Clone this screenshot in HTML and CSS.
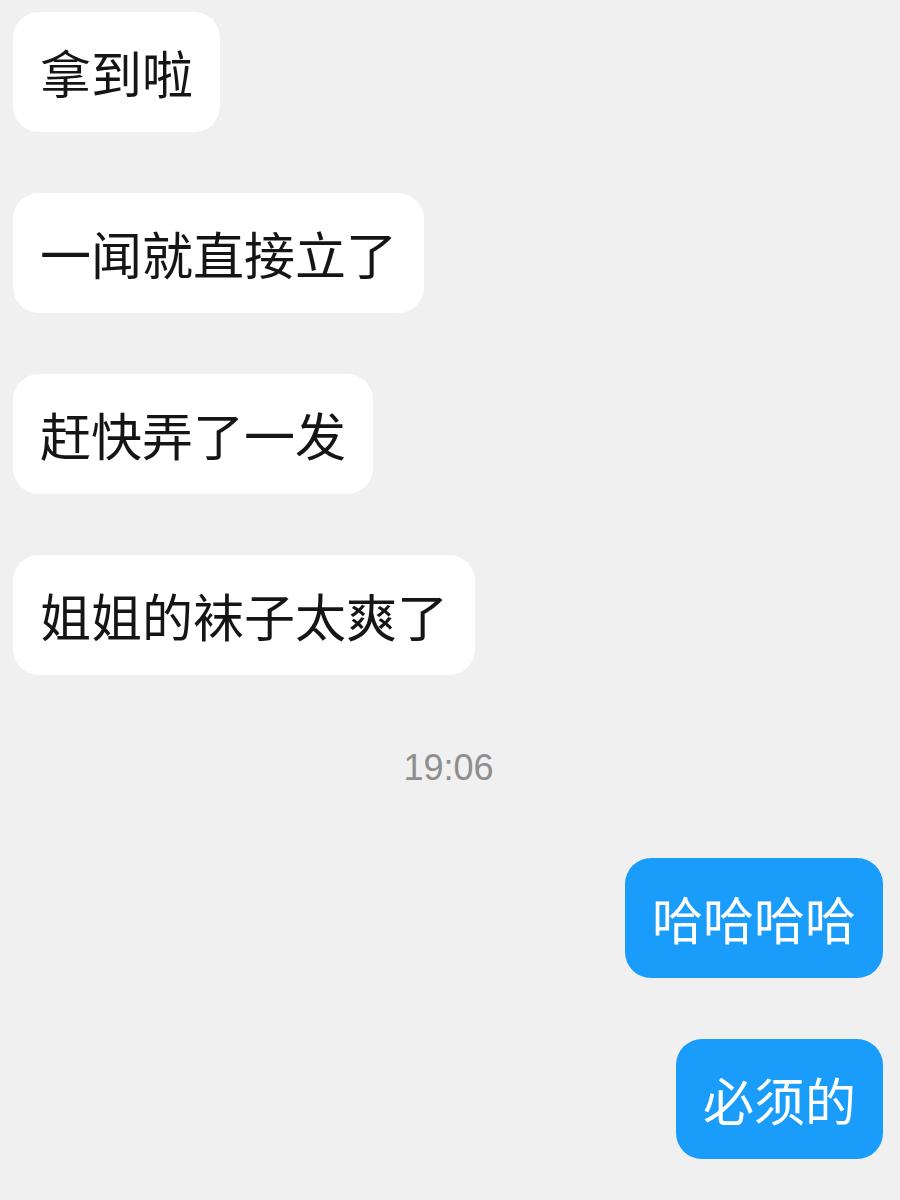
FILE: index.html
```html
<!doctype html>
<html>
<head>
<meta charset="utf-8">
<title>聊天</title>
<link rel="stylesheet" href="styles.css">
</head>
<body>
<div class="chat">
	<div class="row left"><div class="bubble">拿到啦</div></div>
	<div class="row left"><div class="bubble">一闻就直接立了</div></div>
	<div class="row left"><div class="bubble">赶快弄了一发</div></div>
	<div class="row left"><div class="bubble">姐姐的袜子太爽了</div></div>
	<div class="time">19:06</div>
	<div class="row right"><div class="bubble me">哈哈哈哈</div></div>
	<div class="row right"><div class="bubble me">必须的</div></div>
</div>
</body>
</html>
```
FILE: styles.css
```css
*{ margin:0; padding:0; box-sizing:border-box;}
body{ background:#f0f0f0; font-family:"Noto Sans CJK SC","Liberation Sans",sans-serif;}
.chat{ display:flex; flex-direction:column; gap:61px; padding:12px 17px 0 13px;}
.row{ display:flex;}
.row.right{ justify-content:flex-end;}
.bubble{ background:#fff; color:#151515; font-size:51px; line-height:60px; padding:30px 27px; border-radius:26px; white-space:nowrap;}
.bubble.me{ background:#1a9cfb; color:#fff;}
.time{ text-align:center; font-family:"Liberation Sans",sans-serif; font-size:36px; line-height:36px; color:#8e8e8e; margin:14px 0 11px; padding-left:1px;}
```
